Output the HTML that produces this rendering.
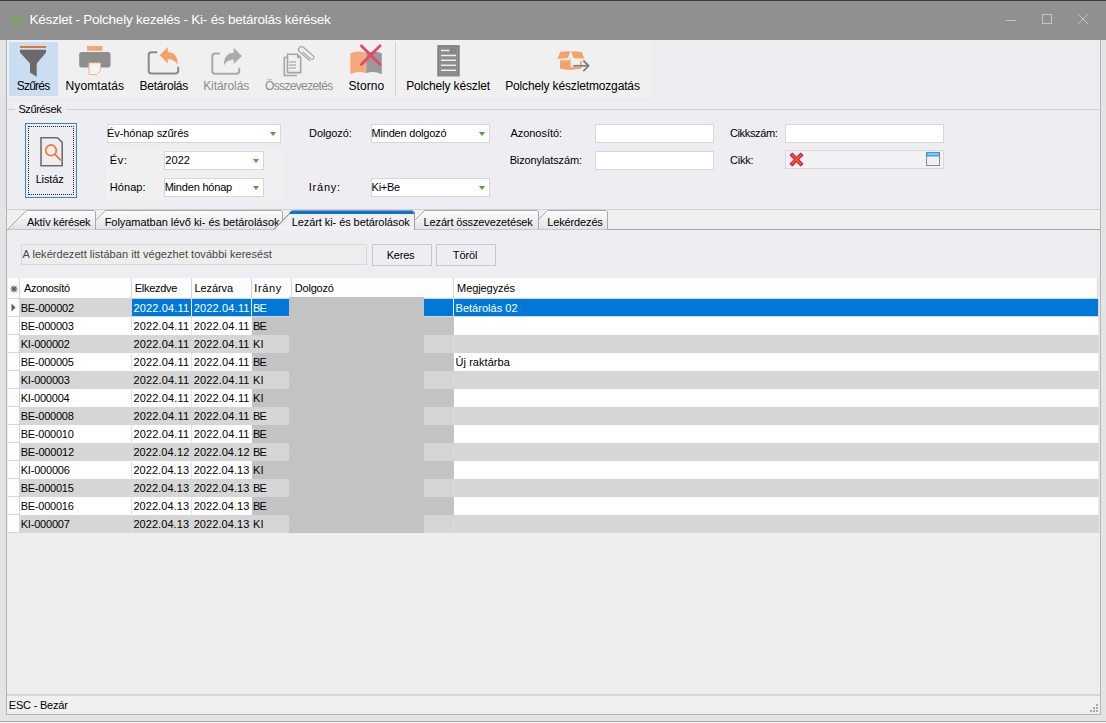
<!DOCTYPE html>
<html><head><meta charset="utf-8">
<style>
*{box-sizing:border-box;margin:0;padding:0}
html,body{width:1106px;height:723px;overflow:hidden}
body{position:relative;background:#e4e4e4;font-family:"Liberation Sans",sans-serif;font-size:11px;color:#000}
.a{position:absolute}
svg.a{overflow:visible}
.t{position:absolute;white-space:nowrap;line-height:14px}
.tb{font-size:12px;color:#1e1e1e}
.dis{color:#8a8a8a}
#title{left:0;top:0;width:1106px;height:40px;background:#909090;border-top:1px solid #3c3c3c}
#content{left:6px;top:40px;width:1095px;height:675px;background:#eeeef2;border-left:1px solid #b4b4b4;border-right:1px solid #b4b4b4}
.combo{position:absolute;background:#fff;border:1px solid #d6d6da;height:19px}
.combo .v{position:absolute;left:1px;top:2px;white-space:nowrap;line-height:14px}
.combo .arr{position:absolute;right:4px;top:7px;width:0;height:0;border-left:3.5px solid transparent;border-right:3.5px solid transparent;border-top:4px solid #4aa43a}
.inp{position:absolute;background:#fff;border:1px solid #d6d6da;height:19px}
.btn{position:absolute;border:1px solid #c6c9d8;background:#eeeef2;height:22px}
.g{font-size:11px;color:#000}
</style></head><body>
<div id="title" class="a">
  <svg class="a" style="left:6px;top:7px" width="24" height="24" viewBox="0 0 24 24">
    <g fill="none" stroke="#6cb23e" stroke-width="1.4" stroke-linecap="round">
      <path d="M6.8 8.2 Q11 11.5 15.4 8.2"/>
      <path d="M5 10.6 Q9.6 12 9.5 17.5"/>
      <path d="M17 10.6 Q12.4 12 12.5 17.5"/>
    </g>
    <g fill="#6cb23e">
      <circle cx="9.6" cy="6.6" r="0.9"/><circle cx="12.6" cy="6.6" r="0.9"/>
      <circle cx="5" cy="13.6" r="0.9"/><circle cx="6.6" cy="16.3" r="0.9"/>
      <circle cx="17" cy="13.8" r="0.9"/><circle cx="15.5" cy="16.3" r="0.9"/>
    </g>
  </svg>
  <svg class="a" style="left:1000px;top:7px" width="96" height="24">
    <g stroke="#c6c6c6" stroke-width="1" fill="none">
      <line x1="6" y1="12.5" x2="16" y2="12.5"/>
      <rect x="42.5" y="6.5" width="9" height="9"/>
      <line x1="78" y1="6" x2="88" y2="16"/><line x1="88" y1="6" x2="78" y2="16"/>
    </g>
  </svg>
</div>
<div id="content" class="a"></div>

<!-- toolbar -->
<div class="a" style="left:7px;top:40px;width:643px;height:57px;background:#f0f0f0"></div>
<div class="a" style="left:9px;top:42px;width:49px;height:54px;background:#c9ddf3"></div>
<svg class="a" style="left:0;top:0" width="700" height="100">
  <!-- funnel -->
  <rect x="20" y="46" width="26" height="2" fill="#e8732a"/>
  <path d="M20 49.8 H46 V52.5 L36.7 63.5 V76.8 L30 72.5 V63.5 L20 52.5 Z" fill="#6a6a6a"/>
  <!-- printer -->
  <rect x="87" y="46" width="15.5" height="4.8" fill="#f4a67a"/>
  <rect x="79.2" y="52" width="31.3" height="15.4" rx="2.5" fill="#8e8e8e"/>
  <path d="M89 62.9 H100.6 V70.5 L96.5 74.6 H89 Z" fill="#f3f3f3" stroke="#f4b48c" stroke-width="1"/>
  <!-- betarolas -->
  <path d="M157.2 52.2 H151.5 Q148.7 52.2 148.7 55 V70.7 Q148.7 73.5 151.5 73.5 H175.4 Q178.2 73.5 178.2 70.7 V66.8" fill="none" stroke="#8a8a8a" stroke-width="2"/>
  <path d="M159.7 55.2 L167.8 47 V52 C173.5 52.2 178.2 56 177.6 64.8 C175.5 60.5 172 59.2 167.8 59.2 V63.4 Z" fill="#f4a26c"/>
  <!-- kitarolas -->
  <path d="M219.9 53.5 H215.1 Q212.3 53.5 212.3 56.3 V70.9 Q212.3 73.7 215.1 73.7 H236.4 Q239.2 73.7 239.2 70.9 V67.8" fill="none" stroke="#aaaaaa" stroke-width="2"/>
  <path d="M242 56 L233.7 47.8 V52.8 C228 53 223.4 56.8 224 65.6 C226 61.2 229.5 59.8 233.7 59.8 V64 Z" fill="#ababab"/>
  <!-- osszevezetes -->
  <path d="M287.5 57.5 H284.3 V75.5 H297" fill="none" stroke="#a6a6a6" stroke-width="1.6"/>
  <path d="M287.5 54.2 H297.2 L300.7 57.7 V72.6 H287.5 Z" fill="#f0f0f0" stroke="#a6a6a6" stroke-width="1.6"/>
  <path d="M297 54.2 V58 H300.7 Z" fill="#a6a6a6"/>
  <g stroke="#a6a6a6" stroke-width="1.2"><line x1="289" y1="62" x2="296" y2="62"/><line x1="289" y1="65" x2="296" y2="65"/><line x1="289" y1="68" x2="296" y2="68"/></g>
  <g transform="translate(306.8 53.8) rotate(-49) scale(1.22)"><path d="M-1 -3.5 V5.2 A1.6 1.6 0 0 0 2.2 5.2 V-5.6 A2.4 2.4 0 0 0 -2.6 -5.6 V6" fill="none" stroke="#a6a6a6" stroke-width="1"/></g>
  <!-- storno -->
  <path d="M350.3 53.3 Q358 50 366.3 53 V73.2 Q358 70.5 350.3 74.3 Z" fill="#f4a97a"/>
  <path d="M366.3 53 Q374 50.5 381.8 53.2 V74.3 Q374 70.5 366.3 73.2 Z" fill="#999"/>
  <g stroke="#e54868" stroke-width="2.8" stroke-linecap="round"><line x1="361.3" y1="45.8" x2="380.1" y2="64.6"/><line x1="380.1" y1="45.8" x2="361.3" y2="64.6"/></g>
  <!-- polchely keszlet -->
  <rect x="437.2" y="45" width="22.6" height="31.5" fill="#8e8e8e"/>
  <rect x="438.5" y="46.5" width="20" height="28.5" fill="none" stroke="#7e7e7e" stroke-width="0.8"/>
  <rect x="450.5" y="49" width="5.5" height="3.5" fill="#888" stroke="#777" stroke-width="0.6"/><g stroke="#f2f2f2" stroke-width="1.4"><line x1="441" y1="50.5" x2="449.5" y2="50.5"/><line x1="441" y1="55.5" x2="456" y2="55.5"/><line x1="441" y1="60.3" x2="456" y2="60.3"/><line x1="441" y1="65.3" x2="456" y2="65.3"/><line x1="441" y1="70.3" x2="456" y2="70.3"/></g>
  <!-- keszletmozgatas -->
  <path d="M557.4 58.7 L560.5 51.8 Q565 51 570.5 51.2 L568 58 Q562 58.8 557.4 58.7Z" fill="#f4a26c"/>
  <path d="M571.2 51.2 Q577 51.2 581.8 52 L584.3 58.5 L573.5 58.2 Z" fill="#f4a26c"/>
  <path d="M560 60.3 H569.5 L570.2 57 L571 70 Q565 69.5 560 68.5 Z" fill="#f4a26c"/>
  <rect x="580" y="61" width="1.6" height="4" fill="#f4a26c"/>
  <path d="M571 67.3 L581.6 66.8 V68.6 Q576 69.6 571 70 Z" fill="#f4a26c"/>
  <g stroke="#808080" stroke-width="1.8" fill="none"><line x1="573.2" y1="65.8" x2="588.5" y2="65.8"/><path d="M583.3 60.5 L588.6 65.8 L583.3 71.1"/></g>
  <line x1="395.5" y1="42" x2="395.5" y2="96" stroke="#cfd0da" stroke-width="1"/>
</svg>

<!-- group -->
<div class="a" style="left:8px;top:109px;width:1091px;height:1px;background:#cfd0dc"></div>

<div class="a" style="left:25px;top:123px;width:52px;height:75px;border:1.5px solid #2a86e0;background:#eeeef2"></div>
<div class="a" style="left:28px;top:126px;width:46px;height:69px;border:1px dotted #222"></div>
<svg class="a" style="left:0;top:0" width="100" height="200">
  <path d="M41 137.8 H57.6 L62.2 142.4 V165.8 H41 Z" fill="none" stroke="#6e6e6e" stroke-width="1.6"/>
  <circle cx="51" cy="150.3" r="5.3" fill="none" stroke="#f07e3c" stroke-width="1.8"/>
  <line x1="54.8" y1="154.2" x2="60.3" y2="159.8" stroke="#f07e3c" stroke-width="1.9" stroke-linecap="round"/>
</svg>

<div class="a" style="left:106px;top:149px;width:176px;height:51px;background:#f0f0f0"></div>
<div class="combo" style="left:107px;top:124px;width:174px"><div class="arr"></div></div>
<div class="combo" style="left:164px;top:151px;width:100px"><div class="arr"></div></div>
<div class="combo" style="left:164px;top:178px;width:100px"><div class="arr"></div></div>
<div class="combo" style="left:371px;top:124px;width:119px"><div class="arr"></div></div>
<div class="combo" style="left:371px;top:178px;width:119px"><div class="arr"></div></div>
<div class="inp" style="left:595px;top:124px;width:119px"></div>
<div class="inp" style="left:595px;top:151px;width:119px"></div>
<div class="inp" style="left:785px;top:124px;width:159px"></div>
<div class="inp" style="left:785px;top:150px;width:159px;background:#f2f2f4;border-color:#d8d8dc"></div>
<svg class="a" style="left:0;top:0" width="960" height="180">
  <g stroke-linecap="square">
    <g stroke="#e040e0" stroke-width="4.2"><line x1="792.3" y1="155.3" x2="800.7" y2="163.7"/><line x1="800.7" y1="155.3" x2="792.3" y2="163.7"/></g>
    <g stroke="#b02010" stroke-width="3.2"><line x1="792.3" y1="155.3" x2="800.7" y2="163.7"/><line x1="800.7" y1="155.3" x2="792.3" y2="163.7"/></g>
    <g stroke="#f25a22" stroke-width="2"><line x1="792.3" y1="155.3" x2="800.7" y2="163.7"/><line x1="800.7" y1="155.3" x2="792.3" y2="163.7"/></g>
  </g>
  <rect x="926.5" y="152.5" width="13" height="13" fill="#f0f0f0" stroke="#8a8a8a" stroke-width="1"/>
  <rect x="926" y="152" width="14" height="4.5" rx="1" fill="#3a9ad8"/>
  <rect x="927.5" y="153.2" width="11" height="2" fill="#7fd0f8"/>
</svg>

<!-- group bottom -->
<div class="a" style="left:7px;top:209px;width:1093px;height:1px;background:#cdcfdb"></div>

<!-- tabs -->
<div class="a" style="left:7px;top:210px;width:1093px;height:19px;background:#f0f0f0"></div>
<svg class="a" style="left:0;top:0" width="1106" height="240">
  <defs>
    <linearGradient id="tg" x1="0" y1="0" x2="0" y2="1"><stop offset="0" stop-color="#fdfdfd"/><stop offset="1" stop-color="#e2e2e4"/></linearGradient>
  </defs>
  <line x1="7" y1="229.5" x2="1100" y2="229.5" stroke="#a9a9ab" stroke-width="1"/>
  <g stroke="#a9a9ab" stroke-width="1" fill="url(#tg)">
    <path d="M528.5 229.5 L547.5 210.5 H606 L607.5 212 V229.5"/>
    <path d="M405.5 229.5 L424.5 210.5 H537 L538.5 212 V229.5"/>
    <path d="M86.5 229.5 L105.5 210.5 H281 L282.5 212 V229.5"/>
    <path d="M7.5 229.5 L26.5 210.5 H94 L95.5 212 V229.5"/>
  </g>
</svg>
<div class="t" style="left:27.10px;top:215.19px;font-size:11px;letter-spacing:-0.208px">Aktív kérések</div>
<div class="t" style="left:104.65px;top:215.19px;font-size:11px;letter-spacing:-0.037px">Folyamatban lévő ki- és betárolások</div>
<div class="t" style="left:423.55px;top:215.19px;font-size:11px;letter-spacing:-0.133px">Lezárt összevezetések</div>
<div class="t" style="left:547.25px;top:215.19px;font-size:11px;letter-spacing:-0.139px">Lekérdezés</div>
<svg class="a" style="left:0;top:0" width="1106" height="240">
  <path d="M273.5 230 L292.5 210.5 H413 L414.5 212 V230" fill="#f0f0f2" stroke="#a0a0a2" stroke-width="1"/><line x1="273.5" y1="230" x2="292.5" y2="210.5" stroke="#8c8c8e" stroke-width="1"/>
  <path d="M290.5 211 H412.5 L414 212.5 V214 H289.5 Z" fill="#0a74d6"/>
  <rect x="274.5" y="229" width="139.5" height="2" fill="#f0f0f2"/>
</svg>
<div class="t" style="left:291.65px;top:215.19px;font-size:11px;letter-spacing:-0.071px">Lezárt ki- és betárolások</div>

<!-- search -->
<div class="a" style="left:21px;top:244px;width:346px;height:21px;border:1px solid #d8d8dc;background:#ededed"></div>
<div class="btn" style="left:372px;top:244px;width:60px"></div>
<div class="btn" style="left:436px;top:244px;width:60px"></div>

<div class="a" style="left:7px;top:532px;width:1092px;height:162px;background:#eeeeee"></div>
<div class="a" style="left:8px;top:278px;width:1090px;height:20px;background:#fdfdfd"></div>
<div class="a" style="left:8px;top:298px;width:1090px;height:1px;background:#d0d4e4"></div>
<div class="a" style="left:1098px;top:278px;width:2px;height:254px;background:#e8e8ea"></div>
<div class="a" style="left:1097px;top:278px;width:1px;height:20px;background:#d8dae6"></div>
<div class="a" style="left:19px;top:278px;width:1px;height:20px;background:#d0d4e4"></div>
<div class="t" style="left:24.00px;top:281.19px;font-size:11px;letter-spacing:-0.35px;color:#000">Azonosító</div>
<div class="a" style="left:131px;top:278px;width:1px;height:20px;background:#d0d4e4"></div>
<div class="t" style="left:134.75px;top:281.19px;font-size:11px;letter-spacing:-0.286px;color:#000">Elkezdve</div>
<div class="a" style="left:191px;top:278px;width:1px;height:20px;background:#d0d4e4"></div>
<div class="t" style="left:194.45px;top:281.19px;font-size:11px;letter-spacing:-0.083px;color:#000">Lezárva</div>
<div class="a" style="left:251px;top:278px;width:1px;height:20px;background:#d0d4e4"></div>
<div class="t" style="left:254.30px;top:281.19px;font-size:11px;letter-spacing:0.625px;color:#000">Irány</div>
<div class="a" style="left:291px;top:278px;width:1px;height:20px;background:#d0d4e4"></div>
<div class="t" style="left:294.75px;top:281.19px;font-size:11px;letter-spacing:-0.208px;color:#000">Dolgozó</div>
<div class="a" style="left:453px;top:278px;width:1px;height:20px;background:#d0d4e4"></div>
<div class="t" style="left:457.05px;top:281.19px;font-size:11px;letter-spacing:-0.083px;color:#000">Megjegyzés</div>
<svg class="a" style="left:10px;top:285px" width="8" height="8" viewBox="0 0 8 8"><g stroke="#555" stroke-width="1.1"><line x1="4" y1="0.5" x2="4" y2="7.5"/><line x1="0.5" y1="4" x2="7.5" y2="4"/><line x1="1.5" y1="1.5" x2="6.5" y2="6.5"/><line x1="6.5" y1="1.5" x2="1.5" y2="6.5"/></g></svg>
<div class="a" style="left:8px;top:299px;width:11px;height:17px;background:#fdfdfd"></div>
<div class="a" style="left:8px;top:316px;width:11px;height:1px;background:#d0d4e4"></div>
<div class="a" style="left:19px;top:299px;width:1px;height:18px;background:#d0d4e4"></div>
<div class="a" style="left:20px;top:299px;width:1079px;height:18px;background:#d6d6d6"></div>
<div class="a" style="left:132px;top:299px;width:966px;height:17px;background:#0078d7"></div>
<svg class="a" style="left:11px;top:303px" width="5" height="9"><path d="M0.5 0.5L4.5 4.5L0.5 8.5Z" fill="#606060"/></svg>
<div class="a" style="left:191px;top:299px;width:1px;height:17px;background:#f4f4f8"></div>
<div class="a" style="left:251px;top:299px;width:1px;height:17px;background:#f4f4f8"></div>
<div class="a" style="left:453px;top:299px;width:1px;height:17px;background:#f4f4f8"></div>
<div class="a" style="left:8px;top:317px;width:11px;height:17px;background:#fdfdfd"></div>
<div class="a" style="left:8px;top:334px;width:11px;height:1px;background:#d0d4e4"></div>
<div class="a" style="left:19px;top:317px;width:1px;height:18px;background:#d0d4e4"></div>
<div class="a" style="left:20px;top:317px;width:1078px;height:18px;background:#ffffff"></div>
<div class="a" style="left:252px;top:317px;width:202px;height:18px;background:#c3c3c3"></div>
<div class="a" style="left:131px;top:317px;width:1px;height:18px;background:#e2e2e4"></div>
<div class="a" style="left:191px;top:317px;width:1px;height:18px;background:#e2e2e4"></div>
<div class="a" style="left:8px;top:335px;width:11px;height:17px;background:#fdfdfd"></div>
<div class="a" style="left:8px;top:352px;width:11px;height:1px;background:#d0d4e4"></div>
<div class="a" style="left:19px;top:335px;width:1px;height:18px;background:#d0d4e4"></div>
<div class="a" style="left:20px;top:335px;width:1079px;height:18px;background:#d6d6d6"></div>
<div class="a" style="left:131px;top:335px;width:1px;height:18px;background:#dcdcdc"></div>
<div class="a" style="left:453px;top:335px;width:1px;height:18px;background:#dcdcdc"></div>
<div class="a" style="left:8px;top:353px;width:11px;height:17px;background:#fdfdfd"></div>
<div class="a" style="left:8px;top:370px;width:11px;height:1px;background:#d0d4e4"></div>
<div class="a" style="left:19px;top:353px;width:1px;height:18px;background:#d0d4e4"></div>
<div class="a" style="left:20px;top:353px;width:1078px;height:18px;background:#ffffff"></div>
<div class="a" style="left:252px;top:353px;width:202px;height:18px;background:#c3c3c3"></div>
<div class="a" style="left:131px;top:353px;width:1px;height:18px;background:#e2e2e4"></div>
<div class="a" style="left:191px;top:353px;width:1px;height:18px;background:#e2e2e4"></div>
<div class="a" style="left:8px;top:371px;width:11px;height:17px;background:#fdfdfd"></div>
<div class="a" style="left:8px;top:388px;width:11px;height:1px;background:#d0d4e4"></div>
<div class="a" style="left:19px;top:371px;width:1px;height:18px;background:#d0d4e4"></div>
<div class="a" style="left:20px;top:371px;width:1079px;height:18px;background:#d6d6d6"></div>
<div class="a" style="left:131px;top:371px;width:1px;height:18px;background:#dcdcdc"></div>
<div class="a" style="left:453px;top:371px;width:1px;height:18px;background:#dcdcdc"></div>
<div class="a" style="left:8px;top:389px;width:11px;height:17px;background:#fdfdfd"></div>
<div class="a" style="left:8px;top:406px;width:11px;height:1px;background:#d0d4e4"></div>
<div class="a" style="left:19px;top:389px;width:1px;height:18px;background:#d0d4e4"></div>
<div class="a" style="left:20px;top:389px;width:1078px;height:18px;background:#ffffff"></div>
<div class="a" style="left:252px;top:389px;width:202px;height:18px;background:#c3c3c3"></div>
<div class="a" style="left:131px;top:389px;width:1px;height:18px;background:#e2e2e4"></div>
<div class="a" style="left:191px;top:389px;width:1px;height:18px;background:#e2e2e4"></div>
<div class="a" style="left:8px;top:407px;width:11px;height:17px;background:#fdfdfd"></div>
<div class="a" style="left:8px;top:424px;width:11px;height:1px;background:#d0d4e4"></div>
<div class="a" style="left:19px;top:407px;width:1px;height:18px;background:#d0d4e4"></div>
<div class="a" style="left:20px;top:407px;width:1079px;height:18px;background:#d6d6d6"></div>
<div class="a" style="left:131px;top:407px;width:1px;height:18px;background:#dcdcdc"></div>
<div class="a" style="left:453px;top:407px;width:1px;height:18px;background:#dcdcdc"></div>
<div class="a" style="left:8px;top:425px;width:11px;height:17px;background:#fdfdfd"></div>
<div class="a" style="left:8px;top:442px;width:11px;height:1px;background:#d0d4e4"></div>
<div class="a" style="left:19px;top:425px;width:1px;height:18px;background:#d0d4e4"></div>
<div class="a" style="left:20px;top:425px;width:1078px;height:18px;background:#ffffff"></div>
<div class="a" style="left:252px;top:425px;width:202px;height:18px;background:#c3c3c3"></div>
<div class="a" style="left:131px;top:425px;width:1px;height:18px;background:#e2e2e4"></div>
<div class="a" style="left:191px;top:425px;width:1px;height:18px;background:#e2e2e4"></div>
<div class="a" style="left:8px;top:443px;width:11px;height:17px;background:#fdfdfd"></div>
<div class="a" style="left:8px;top:460px;width:11px;height:1px;background:#d0d4e4"></div>
<div class="a" style="left:19px;top:443px;width:1px;height:18px;background:#d0d4e4"></div>
<div class="a" style="left:20px;top:443px;width:1079px;height:18px;background:#d6d6d6"></div>
<div class="a" style="left:131px;top:443px;width:1px;height:18px;background:#dcdcdc"></div>
<div class="a" style="left:453px;top:443px;width:1px;height:18px;background:#dcdcdc"></div>
<div class="a" style="left:8px;top:461px;width:11px;height:17px;background:#fdfdfd"></div>
<div class="a" style="left:8px;top:478px;width:11px;height:1px;background:#d0d4e4"></div>
<div class="a" style="left:19px;top:461px;width:1px;height:18px;background:#d0d4e4"></div>
<div class="a" style="left:20px;top:461px;width:1078px;height:18px;background:#ffffff"></div>
<div class="a" style="left:252px;top:461px;width:202px;height:18px;background:#c3c3c3"></div>
<div class="a" style="left:131px;top:461px;width:1px;height:18px;background:#e2e2e4"></div>
<div class="a" style="left:191px;top:461px;width:1px;height:18px;background:#e2e2e4"></div>
<div class="a" style="left:8px;top:479px;width:11px;height:17px;background:#fdfdfd"></div>
<div class="a" style="left:8px;top:496px;width:11px;height:1px;background:#d0d4e4"></div>
<div class="a" style="left:19px;top:479px;width:1px;height:18px;background:#d0d4e4"></div>
<div class="a" style="left:20px;top:479px;width:1079px;height:18px;background:#d6d6d6"></div>
<div class="a" style="left:131px;top:479px;width:1px;height:18px;background:#dcdcdc"></div>
<div class="a" style="left:453px;top:479px;width:1px;height:18px;background:#dcdcdc"></div>
<div class="a" style="left:8px;top:497px;width:11px;height:17px;background:#fdfdfd"></div>
<div class="a" style="left:8px;top:514px;width:11px;height:1px;background:#d0d4e4"></div>
<div class="a" style="left:19px;top:497px;width:1px;height:18px;background:#d0d4e4"></div>
<div class="a" style="left:20px;top:497px;width:1078px;height:18px;background:#ffffff"></div>
<div class="a" style="left:252px;top:497px;width:202px;height:18px;background:#c3c3c3"></div>
<div class="a" style="left:131px;top:497px;width:1px;height:18px;background:#e2e2e4"></div>
<div class="a" style="left:191px;top:497px;width:1px;height:18px;background:#e2e2e4"></div>
<div class="a" style="left:8px;top:515px;width:11px;height:17px;background:#fdfdfd"></div>
<div class="a" style="left:8px;top:532px;width:11px;height:1px;background:#d0d4e4"></div>
<div class="a" style="left:19px;top:515px;width:1px;height:18px;background:#d0d4e4"></div>
<div class="a" style="left:20px;top:515px;width:1079px;height:18px;background:#d6d6d6"></div>
<div class="a" style="left:131px;top:515px;width:1px;height:18px;background:#dcdcdc"></div>
<div class="a" style="left:453px;top:515px;width:1px;height:18px;background:#dcdcdc"></div>
<div class="a" style="left:289px;top:297px;width:135px;height:236px;background:#c3c3c3"></div>
<div class="t" style="left:20.65px;top:301.19px;font-size:11px;letter-spacing:-0.194px;color:#000">BE-000002</div>
<div class="t" style="left:133.40px;top:301.19px;font-size:11px;letter-spacing:0.172px;color:#fff">2022.04.11</div>
<div class="t" style="left:193.70px;top:301.19px;font-size:11px;letter-spacing:0.172px;color:#fff">2022.04.11</div>
<div class="t" style="left:252.95px;top:301.19px;font-size:11px;letter-spacing:-0.7px;color:#fff">BE</div>
<div class="t" style="left:455.55px;top:301.19px;font-size:11px;letter-spacing:0.018px;color:#fff">Betárolás 02</div>
<div class="t" style="left:20.65px;top:319.19px;font-size:11px;letter-spacing:-0.225px;color:#000">BE-000003</div>
<div class="t" style="left:133.40px;top:319.19px;font-size:11px;letter-spacing:0.172px;color:#000">2022.04.11</div>
<div class="t" style="left:193.70px;top:319.19px;font-size:11px;letter-spacing:0.172px;color:#000">2022.04.11</div>
<div class="t" style="left:252.95px;top:319.19px;font-size:11px;letter-spacing:-0.7px;color:#000">BE</div>
<div class="t" style="left:20.65px;top:337.19px;font-size:11px;letter-spacing:-0.187px;color:#000">KI-000002</div>
<div class="t" style="left:133.40px;top:337.19px;font-size:11px;letter-spacing:0.172px;color:#000">2022.04.11</div>
<div class="t" style="left:193.70px;top:337.19px;font-size:11px;letter-spacing:0.172px;color:#000">2022.04.11</div>
<div class="t" style="left:252.95px;top:337.19px;font-size:11px;letter-spacing:0.25px;color:#000">KI</div>
<div class="t" style="left:20.65px;top:355.19px;font-size:11px;letter-spacing:-0.225px;color:#000">BE-000005</div>
<div class="t" style="left:133.40px;top:355.19px;font-size:11px;letter-spacing:0.172px;color:#000">2022.04.11</div>
<div class="t" style="left:193.70px;top:355.19px;font-size:11px;letter-spacing:0.172px;color:#000">2022.04.11</div>
<div class="t" style="left:252.95px;top:355.19px;font-size:11px;letter-spacing:-0.7px;color:#000">BE</div>
<div class="t" style="left:455.55px;top:355.19px;font-size:11px;letter-spacing:0.045px;color:#000">Új raktárba</div>
<div class="t" style="left:20.65px;top:373.19px;font-size:11px;letter-spacing:-0.187px;color:#000">KI-000003</div>
<div class="t" style="left:133.40px;top:373.19px;font-size:11px;letter-spacing:0.172px;color:#000">2022.04.11</div>
<div class="t" style="left:193.70px;top:373.19px;font-size:11px;letter-spacing:0.172px;color:#000">2022.04.11</div>
<div class="t" style="left:252.95px;top:373.19px;font-size:11px;letter-spacing:0.25px;color:#000">KI</div>
<div class="t" style="left:20.65px;top:391.19px;font-size:11px;letter-spacing:-0.219px;color:#000">KI-000004</div>
<div class="t" style="left:133.40px;top:391.19px;font-size:11px;letter-spacing:0.172px;color:#000">2022.04.11</div>
<div class="t" style="left:193.70px;top:391.19px;font-size:11px;letter-spacing:0.172px;color:#000">2022.04.11</div>
<div class="t" style="left:252.95px;top:391.19px;font-size:11px;letter-spacing:0.25px;color:#000">KI</div>
<div class="t" style="left:20.65px;top:409.19px;font-size:11px;letter-spacing:-0.225px;color:#000">BE-000008</div>
<div class="t" style="left:133.40px;top:409.19px;font-size:11px;letter-spacing:0.172px;color:#000">2022.04.11</div>
<div class="t" style="left:193.70px;top:409.19px;font-size:11px;letter-spacing:0.172px;color:#000">2022.04.11</div>
<div class="t" style="left:252.95px;top:409.19px;font-size:11px;letter-spacing:-0.7px;color:#000">BE</div>
<div class="t" style="left:20.65px;top:427.19px;font-size:11px;letter-spacing:-0.225px;color:#000">BE-000010</div>
<div class="t" style="left:133.40px;top:427.19px;font-size:11px;letter-spacing:0.172px;color:#000">2022.04.11</div>
<div class="t" style="left:193.70px;top:427.19px;font-size:11px;letter-spacing:0.172px;color:#000">2022.04.11</div>
<div class="t" style="left:252.95px;top:427.19px;font-size:11px;letter-spacing:-0.7px;color:#000">BE</div>
<div class="t" style="left:20.65px;top:445.19px;font-size:11px;letter-spacing:-0.194px;color:#000">BE-000012</div>
<div class="t" style="left:133.40px;top:445.19px;font-size:11px;letter-spacing:0.089px;color:#000">2022.04.12</div>
<div class="t" style="left:193.70px;top:445.19px;font-size:11px;letter-spacing:0.089px;color:#000">2022.04.12</div>
<div class="t" style="left:252.95px;top:445.19px;font-size:11px;letter-spacing:-0.7px;color:#000">BE</div>
<div class="t" style="left:20.65px;top:463.19px;font-size:11px;letter-spacing:-0.187px;color:#000">KI-000006</div>
<div class="t" style="left:133.40px;top:463.19px;font-size:11px;letter-spacing:0.061px;color:#000">2022.04.13</div>
<div class="t" style="left:193.70px;top:463.19px;font-size:11px;letter-spacing:0.061px;color:#000">2022.04.13</div>
<div class="t" style="left:252.95px;top:463.19px;font-size:11px;letter-spacing:0.25px;color:#000">KI</div>
<div class="t" style="left:20.65px;top:481.19px;font-size:11px;letter-spacing:-0.225px;color:#000">BE-000015</div>
<div class="t" style="left:133.40px;top:481.19px;font-size:11px;letter-spacing:0.061px;color:#000">2022.04.13</div>
<div class="t" style="left:193.70px;top:481.19px;font-size:11px;letter-spacing:0.061px;color:#000">2022.04.13</div>
<div class="t" style="left:252.95px;top:481.19px;font-size:11px;letter-spacing:-0.7px;color:#000">BE</div>
<div class="t" style="left:20.65px;top:499.19px;font-size:11px;letter-spacing:-0.225px;color:#000">BE-000016</div>
<div class="t" style="left:133.40px;top:499.19px;font-size:11px;letter-spacing:0.061px;color:#000">2022.04.13</div>
<div class="t" style="left:193.70px;top:499.19px;font-size:11px;letter-spacing:0.061px;color:#000">2022.04.13</div>
<div class="t" style="left:252.95px;top:499.19px;font-size:11px;letter-spacing:-0.7px;color:#000">BE</div>
<div class="t" style="left:20.65px;top:517.19px;font-size:11px;letter-spacing:-0.187px;color:#000">KI-000007</div>
<div class="t" style="left:133.40px;top:517.19px;font-size:11px;letter-spacing:0.061px;color:#000">2022.04.13</div>
<div class="t" style="left:193.70px;top:517.19px;font-size:11px;letter-spacing:0.061px;color:#000">2022.04.13</div>
<div class="t" style="left:252.95px;top:517.19px;font-size:11px;letter-spacing:0.25px;color:#000">KI</div>

<!-- status -->
<div class="a" style="left:7px;top:694px;width:1093px;height:2px;background:#d6d6d6"></div>
<div class="a" style="left:7px;top:696px;width:1093px;height:18px;background:#f0f0f0"></div>
<svg class="a" style="left:1088px;top:702px" width="12" height="12"><g fill="#a8a8a8"><rect x="8" y="2" width="2" height="2"/><rect x="5" y="5" width="2" height="2"/><rect x="8" y="5" width="2" height="2"/><rect x="2" y="8" width="2" height="2"/><rect x="5" y="8" width="2" height="2"/><rect x="8" y="8" width="2" height="2"/></g></svg>
<div class="a" style="left:6px;top:714px;width:1095px;height:1px;background:#b4b4b4"></div>
<div class="a" style="left:0;top:721px;width:1106px;height:1px;background:#a8a8a8"></div>
<div class="a" style="left:0;top:722px;width:1106px;height:1px;background:#f4f4f4"></div>

<div class="t" style="left:29.40px;top:13.32px;font-size:13.5px;letter-spacing:-0.237px;color:#fff">Készlet - Polchely kezelés - Ki- és betárolás kérések</div>
<div class="t" style="left:16.70px;top:78.84px;font-size:12px;letter-spacing:-0.76px">Szűrés</div>
<div class="t" style="left:65.40px;top:78.84px;font-size:12px;letter-spacing:0.162px">Nyomtatás</div>
<div class="t" style="left:139.60px;top:78.84px;font-size:12px;letter-spacing:-0.256px">Betárolás</div>
<div class="t" style="left:203.20px;top:78.84px;font-size:12px;letter-spacing:-0.069px;color:#8c8c8c">Kitárolás</div>
<div class="t" style="left:265.10px;top:78.84px;font-size:12px;letter-spacing:-0.664px;color:#8c8c8c">Összevezetés</div>
<div class="t" style="left:348.60px;top:78.84px;font-size:12px;letter-spacing:0.02px">Storno</div>
<div class="t" style="left:406.20px;top:78.84px;font-size:12px;letter-spacing:-0.147px">Polchely készlet</div>
<div class="t" style="left:505.20px;top:78.84px;font-size:12px;letter-spacing:-0.146px">Polchely készletmozgatás</div>
<div class="a" style="left:15px;top:105px;width:51px;height:8px;background:#eeeef2"></div>
<div class="t" style="left:18.40px;top:102.19px;font-size:11px;letter-spacing:-0.357px">Szűrések</div>
<div class="t" style="left:35.65px;top:172.19px;font-size:11px;letter-spacing:-0.14px">Listáz</div>
<div class="t" style="left:106.95px;top:126.19px;font-size:11px;letter-spacing:-0.05px">Év-hónap szűrés</div>
<div class="t" style="left:109.75px;top:153.19px;font-size:11px;letter-spacing:0.675px">Év:</div>
<div class="t" style="left:165.30px;top:153.19px;font-size:11px;letter-spacing:0.067px">2022</div>
<div class="t" style="left:109.75px;top:180.19px;font-size:11px;letter-spacing:0.07px">Hónap:</div>
<div class="t" style="left:164.65px;top:180.19px;font-size:11px;letter-spacing:-0.195px">Minden hónap</div>
<div class="t" style="left:309.05px;top:126.19px;font-size:11px;letter-spacing:-0.093px">Dolgozó:</div>
<div class="t" style="left:371.55px;top:126.19px;font-size:11px;letter-spacing:-0.208px">Minden dolgozó</div>
<div class="t" style="left:308.80px;top:180.19px;font-size:11px;letter-spacing:0.76px">Irány:</div>
<div class="t" style="left:371.55px;top:180.19px;font-size:11px;letter-spacing:-0.25px">Ki+Be</div>
<div class="t" style="left:510.40px;top:126.19px;font-size:11px;letter-spacing:-0.033px">Azonosító:</div>
<div class="t" style="left:509.65px;top:153.19px;font-size:11px;letter-spacing:-0.119px">Bizonylatszám:</div>
<div class="t" style="left:729.90px;top:126.19px;font-size:11px;letter-spacing:-0.344px">Cikkszám:</div>
<div class="t" style="left:729.90px;top:153.19px;font-size:11px;letter-spacing:-0.2px">Cikk:</div>
<div class="t" style="left:22.60px;top:247.19px;font-size:11px;letter-spacing:0.043px;color:#474747">A lekérdezett listában itt végezhet további keresést</div>
<div class="t" style="left:386.75px;top:248.19px;font-size:11px;letter-spacing:-0.237px">Keres</div>
<div class="t" style="left:452.85px;top:248.19px;font-size:11px;letter-spacing:-0.088px">Töröl</div>
<div class="t" style="left:8.75px;top:698.19px;font-size:11px;letter-spacing:-0.195px">ESC - Bezár</div>
</body></html>
